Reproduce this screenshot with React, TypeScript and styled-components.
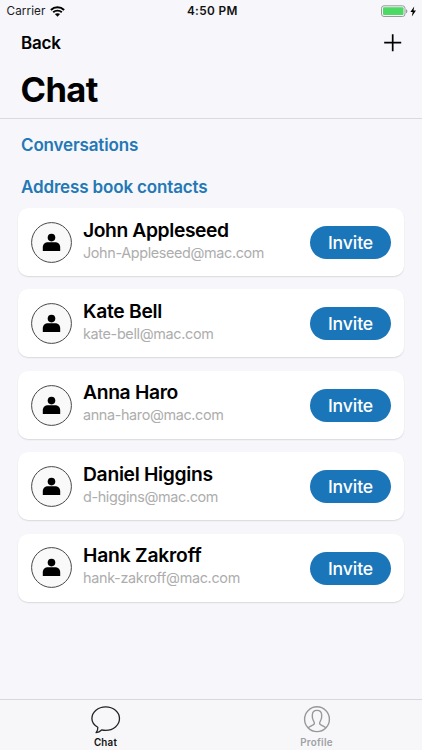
import React from "react";
import styled, { createGlobalStyle } from "styled-components";

const GlobalStyle = createGlobalStyle`
  * { box-sizing: border-box; }
  body { margin: 0; background: #f6f6fb; }
`;

const Screen = styled.div`
  display: flex;
  flex-direction: column;
  width: 422px;
  height: 750px;
  overflow: hidden;
  background: #f6f6fb;
  color: #000;
  font-family: Inter, "Liberation Sans", sans-serif;
`;

const StatusBar = styled.div`
  display: grid;
  grid-template-columns: 1fr auto 1fr;
  align-items: center;
  height: 22px;
  padding: 0 4px 0 6.5px;
`;

const Carrier = styled.div`
  display: flex;
  align-items: center;
  gap: 5px;
  font-size: 11.7px;
  line-height: 22px;
  letter-spacing: 0.09px;
  color: #1c1c1e;
`;

const Clock = styled.div`
  font-size: 11.8px;
  font-weight: 600;
  line-height: 22px;
  letter-spacing: 0.35px;
  color: #111;
`;

const Power = styled.div`
  display: flex;
  align-items: center;
  justify-content: flex-end;
`;

const NavBar = styled.div`
  display: flex;
  align-items: center;
  justify-content: space-between;
  height: 42px;
  padding: 0 20px 0 21px;
`;

const BackButton = styled.button`
  padding: 0;
  border: 0;
  background: none;
  color: #000;
  font: 600 17px/24px Inter, sans-serif;
  letter-spacing: -0.2px;
`;

const AddButton = styled.button`
  display: flex;
  padding: 0;
  border: 0;
  background: none;
`;

const TitleBar = styled.div`
  height: 55px;
  padding: 5px 20.5px 0;
  border-bottom: 1px solid #d9d9e0;
`;

const Title = styled.h1`
  margin: 0;
  font-size: 34.5px;
  font-weight: 700;
  line-height: 42px;
  letter-spacing: -0.6px;
`;

const Content = styled.main`
  flex: 1;
  padding: 14px 18px 0;
`;

const SectionTitle = styled.h2<{ $after: number }>`
  margin: 0 3px ${(p) => p.$after}px;
  font-size: 17px;
  font-weight: 600;
  line-height: 24px;
  letter-spacing: -0.15px;
  color: #2378b5;
`;

const ContactList = styled.div`
  display: flex;
  flex-direction: column;
  gap: 13.4px;
`;

const Card = styled.div`
  display: flex;
  align-items: center;
  height: 68px;
  padding: 0 13px 0 12.6px;
  border-radius: 10px;
  background: #fff;
  box-shadow: 0 1px 1.5px rgba(0, 0, 0, 0.12);
`;

const Avatar = styled.svg`
  flex: none;
  width: 41px;
  height: 41px;
  margin-top: 0.5px;
`;

const Details = styled.div`
  flex: 1;
  min-width: 0;
  margin: -3px 0 0 11.4px;
  white-space: nowrap;
`;

const Name = styled.div<{ $track: number }>`
  font-size: 19.3px;
  font-weight: 580;
  line-height: 24px;
  letter-spacing: ${(p) => p.$track}px;
`;

const Email = styled.div<{ $track: number }>`
  font-size: 14.4px;
  line-height: 22px;
  letter-spacing: ${(p) => p.$track}px;
  color: #adadad;
`;

const InviteButton = styled.button`
  flex: none;
  width: 81px;
  height: 33px;
  margin-top: 1px;
  padding: 0;
  border: 0;
  border-radius: 17px;
  background: #1b75b9;
  color: #fff;
  font: 500 17.6px/33px Inter, sans-serif;
  letter-spacing: -0.1px;
`;

const TabBar = styled.nav`
  display: flex;
  height: 51px;
  border-top: 1px solid #d7d7de;
  background: #f7f7fa;
`;

const Tab = styled.div<{ $active?: boolean }>`
  flex: 1;
  display: flex;
  flex-direction: column;
  align-items: center;
  padding-top: 5px;
  font-size: 9.8px;
  font-weight: 600;
  line-height: 12px;
  letter-spacing: ${(p) => (p.$active ? 0.2 : 0.28)}px;
  color: ${(p) => (p.$active ? "#111" : "#a0a0a3")};
`;

const TabIcon = styled.svg`
  width: 30px;
  height: 30px;
  margin-bottom: 2px;
`;

const contacts = [
  { name: "John Appleseed", email: "John-Appleseed@mac.com", nameTrack: -0.4, emailTrack: -0.36 },
  { name: "Kate Bell", email: "kate-bell@mac.com", nameTrack: -0.3, emailTrack: -0.33 },
  { name: "Anna Haro", email: "anna-haro@mac.com", nameTrack: -0.33, emailTrack: -0.36 },
  { name: "Daniel Higgins", email: "d-higgins@mac.com", nameTrack: -0.3, emailTrack: -0.35 },
  { name: "Hank Zakroff", email: "hank-zakroff@mac.com", nameTrack: -0.2, emailTrack: -0.31 },
];

const WifiIcon = () => (
  <svg width="15" height="11" viewBox="0 0 15 11" fill="none">
    <path d="M.9 4C4.600.3 10.400.3 14.100 4" stroke="#000" strokeWidth="2" />
    <path d="M3.2 6.300c2.400-2.300 6.200-2.300 8.600 0" stroke="#000" strokeWidth="1.900" />
    <path d="M4.900 8.100c1.400-1.300 3.800-1.300 5.200 0l-2.600 2.600z" fill="#000" />
  </svg>
);

const BatteryIcon = () => (
  <svg width="37" height="13" viewBox="0 0 37 13" fill="none">
    <rect x=".5" y=".8" width="23.5" height="10.7" rx="2.5" stroke="#99999d" />
    <rect x="2" y="2.3" width="20.5" height="7.7" rx="1" fill="#4cd964" />
    <path d="M25 4.300c1.800.5 1.800 3.500 0 4z" fill="#99999d" />
    <path d="M33.200 1.500 29.400 7h2.300l-.9 4.400L35 5.600h-2.500z" fill="#000" />
  </svg>
);

const PersonAvatar = () => (
  <Avatar viewBox="0 0 41 41">
    <circle cx="20.5" cy="20.5" r="19.9" fill="#f9f9f9" stroke="#464646" strokeWidth="1" />
    <circle cx="20.5" cy="15.6" r="3.8" fill="#000" />
    <path d="M11.800 29v-3.500c0-3.500 2.200-5.200 5.400-5.200h6.600c3.200 0 5.400 1.700 5.400 5.200v3.500z" fill="#000" />
  </Avatar>
);

export default function App() {
  return (
    <Screen>
      <GlobalStyle />
      <StatusBar>
        <Carrier>
          <span>Carrier</span>
          <WifiIcon />
        </Carrier>
        <Clock>4:50 PM</Clock>
        <Power>
          <BatteryIcon />
        </Power>
      </StatusBar>
      <NavBar>
        <BackButton>Back</BackButton>
        <AddButton aria-label="Add">
          <svg width="18" height="18" viewBox="0 0 18 18">
            <path d="M8.700.2v17M.2 8.700h17" stroke="#000" strokeWidth="1.700" />
          </svg>
        </AddButton>
      </NavBar>
      <TitleBar>
        <Title>Chat</Title>
      </TitleBar>
      <Content>
        <SectionTitle $after={18}>Conversations</SectionTitle>
        <SectionTitle $after={9}>Address book contacts</SectionTitle>
        <ContactList>
          {contacts.map((c) => (
            <Card key={c.email}>
              <PersonAvatar />
              <Details>
                <Name $track={c.nameTrack}>{c.name}</Name>
                <Email $track={c.emailTrack}>{c.email}</Email>
              </Details>
              <InviteButton>Invite</InviteButton>
            </Card>
          ))}
        </ContactList>
      </Content>
      <TabBar>
        <Tab $active>
          <TabIcon viewBox="0 0 30 30" fill="none" stroke="#222" strokeWidth="1.3" strokeLinejoin="round">
            <path d="M6.800 22.300C3.200 20.300.9 17.200.9 13.600.9 7 7.100 1.800 14.700 1.800s13.800 5.200 13.800 11.800-6.200 11.800-13.800 11.800c-1.400 0-2.800-.2-4.100-.5-1.500 1.400-3.300 2.400-5.500 2.800 1.200-1.500 1.900-3.300 1.700-5.400z" />
          </TabIcon>
          Chat
        </Tab>
        <Tab>
          <TabIcon viewBox="0 0 30 30" fill="none" stroke="#98989b" strokeWidth="1.4" strokeLinejoin="round">
            <circle cx="15" cy="14.200" r="12.400" />
            <path d="M6.200 22.800c1-1.500 5.400-2.400 6.100-3.900.5-1.200-.4-2.300-1.100-3.700-.6-1.200-1-3-.9-5C10.400 7.100 12.200 5.400 15 5.400s4.600 1.700 4.700 4.800c.1 2-.3 3.800-.9 5-.7 1.400-1.600 2.500-1.100 3.700.7 1.500 5.100 2.400 6.100 3.900" />
          </TabIcon>
          Profile
        </Tab>
      </TabBar>
    </Screen>
  );
}
